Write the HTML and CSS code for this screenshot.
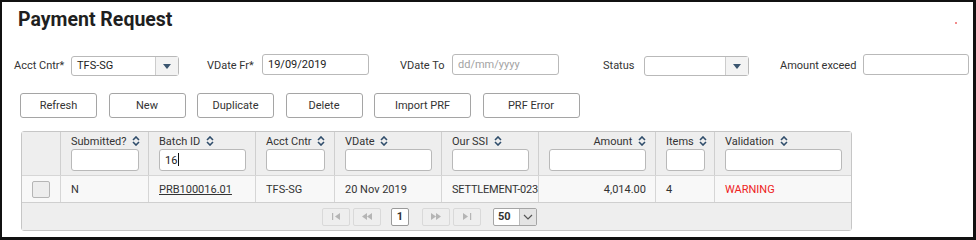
FILE: index.html
```html
<!DOCTYPE html>
<html lang="en">
<head>
    <meta charset="UTF-8">
    <title>Payment Request</title>
    <link rel="stylesheet" href="styles.css">
</head>
<body>

<div class="frame">
    <h1 class="title">Payment Request</h1>
    <span class="dot"></span>

    <!-- Search criteria -->
    <div class="filters">
        <label class="lbl lbl-acct">Acct Cntr*</label>
        <div class="select sel-acct">
            <span class="select-text">TFS-SG</span>
            <span class="select-btn"><svg width="8" height="5" viewBox="0 0 8 5"><path d="M0 0 L8 0 L4 5 Z" fill="#3b5670"/></svg></span>
        </div>

        <label class="lbl lbl-from">VDate Fr*</label>
        <input class="text in-from" type="text" value="19/09/2019">

        <label class="lbl lbl-to">VDate To</label>
        <input class="text in-to" type="text" placeholder="dd/mm/yyyy">

        <label class="lbl lbl-status">Status</label>
        <div class="select sel-status">
            <span class="select-text"></span>
            <span class="select-btn"><svg width="8" height="5" viewBox="0 0 8 5"><path d="M0 0 L8 0 L4 5 Z" fill="#3b5670"/></svg></span>
        </div>

        <label class="lbl lbl-amount">Amount exceed</label>
        <input class="text in-amount" type="text">
    </div>

    <!-- Actions -->
    <div class="actions">
        <button class="btn">Refresh</button>
        <button class="btn">New</button>
        <button class="btn">Duplicate</button>
        <button class="btn">Delete</button>
        <button class="btn btn-wide">Import PRF</button>
        <button class="btn btn-wide">PRF Error</button>
    </div>

    <table class="grid">
        <colgroup>
            <col style="width:38px">
            <col style="width:88px">
            <col style="width:107px">
            <col style="width:79px">
            <col style="width:107px">
            <col style="width:97px">
            <col style="width:117px">
            <col style="width:59px">
            <col style="width:137px">
        </colgroup>
        <thead>
            <tr>
                <th></th>
                <th><div class="th-label">Submitted? <svg class="sort" width="8" height="10" viewBox="0 0 8 10"><path d="M1 4 L4 1 L7 4 M1 6 L4 9 L7 6" fill="none" stroke="#2f4d6b" stroke-width="1.6"/></svg></div><input class="filter" type="text"></th>
                <th><div class="th-label">Batch ID <svg class="sort" width="8" height="10" viewBox="0 0 8 10"><path d="M1 4 L4 1 L7 4 M1 6 L4 9 L7 6" fill="none" stroke="#2f4d6b" stroke-width="1.6"/></svg></div><input class="filter" type="text" value="16"><span class="caret"></span></th>
                <th><div class="th-label">Acct Cntr <svg class="sort" width="8" height="10" viewBox="0 0 8 10"><path d="M1 4 L4 1 L7 4 M1 6 L4 9 L7 6" fill="none" stroke="#2f4d6b" stroke-width="1.6"/></svg></div><input class="filter" type="text"></th>
                <th><div class="th-label">VDate <svg class="sort" width="8" height="10" viewBox="0 0 8 10"><path d="M1 4 L4 1 L7 4 M1 6 L4 9 L7 6" fill="none" stroke="#2f4d6b" stroke-width="1.6"/></svg></div><input class="filter" type="text"></th>
                <th><div class="th-label">Our SSI <svg class="sort" width="8" height="10" viewBox="0 0 8 10"><path d="M1 4 L4 1 L7 4 M1 6 L4 9 L7 6" fill="none" stroke="#2f4d6b" stroke-width="1.6"/></svg></div><input class="filter" type="text"></th>
                <th class="num"><div class="th-label">Amount <svg class="sort" width="8" height="10" viewBox="0 0 8 10"><path d="M1 4 L4 1 L7 4 M1 6 L4 9 L7 6" fill="none" stroke="#2f4d6b" stroke-width="1.6"/></svg></div><input class="filter" type="text"></th>
                <th><div class="th-label">Items <svg class="sort" width="8" height="10" viewBox="0 0 8 10"><path d="M1 4 L4 1 L7 4 M1 6 L4 9 L7 6" fill="none" stroke="#2f4d6b" stroke-width="1.6"/></svg></div><input class="filter" type="text"></th>
                <th><div class="th-label">Validation <svg class="sort" width="8" height="10" viewBox="0 0 8 10"><path d="M1 4 L4 1 L7 4 M1 6 L4 9 L7 6" fill="none" stroke="#2f4d6b" stroke-width="1.6"/></svg></div><input class="filter" type="text"></th>
            </tr>
        </thead>
        <tbody>
            <tr class="row">
                <td class="check-cell"><span class="check"></span></td>
                <td>N</td>
                <td><a class="link" href="#">PRB100016.01</a></td>
                <td>TFS-SG</td>
                <td>20 Nov 2019</td>
                <td class="tight">SETTLEMENT-023</td>
                <td class="num">4,014.00</td>
                <td>4</td>
                <td class="warn">WARNING</td>
            </tr>
            <tr>
                <td class="pager-cell" colspan="9">
                    <div class="pager">
                        <span class="pg pg-first"><svg width="10" height="7" viewBox="0 0 10 7"><rect x="1" y="0" width="1.2" height="7" fill="#b5b5b5"/><path d="M9 0 L9 7 L4 3.5 Z" fill="#b5b5b5"/></svg></span>
                        <span class="pg pg-prev"><svg width="12" height="7" viewBox="0 0 12 7"><path d="M6 0 L6 7 L1 3.5 Z M11 0 L11 7 L6 3.5 Z" fill="#b5b5b5"/></svg></span>
                        <span class="pg-num">1</span>
                        <span class="pg pg-next"><svg width="12" height="7" viewBox="0 0 12 7"><path d="M1 0 L1 7 L6 3.5 Z M6 0 L6 7 L11 3.5 Z" fill="#b5b5b5"/></svg></span>
                        <span class="pg pg-last"><svg width="10" height="7" viewBox="0 0 10 7"><path d="M1 0 L1 7 L6 3.5 Z" fill="#b5b5b5"/><rect x="8" y="0" width="1.2" height="7" fill="#b5b5b5"/></svg></span>
                        <span class="pg-size">
                            <span class="pg-size-text">50</span>
                            <span class="pg-size-btn"><svg width="10" height="6" viewBox="0 0 10 6"><path d="M1 1 L5 5 L9 1" fill="none" stroke="#555" stroke-width="1.2"/></svg></span>
                        </span>
                    </div>
                </td>
            </tr>
        </tbody>
    </table>
</div>

</body>
</html>
```

FILE: styles.css
```css
* {
    box-sizing: border-box;
}
body {
    margin: 0;
    font-family: Roboto, "Liberation Sans", Arial, sans-serif;
    color: #333;
    background: #fff;
}
.frame {
    position: relative;
    width: 976px;
    height: 240px;
    border-style: solid;
    border-color: #111;
    border-width: 2px 3px 3px 2px;
    overflow: hidden;
}
.title {
    margin: 6px 0 0 16px;
    font-size: 19.5px;
    line-height: 24px;
    font-weight: bold;
    color: #1f1f1f;
}
.dot {
    position: absolute;
    left: 953px;
    top: 20px;
    width: 2px;
    height: 2px;
    background: #f28c8c;
}

/* search criteria row */
.filters {
    display: flex;
    align-items: center;
    margin: 22px 0 0 12px;
    height: 22px;
    font-size: 11px;
}
.lbl {
    white-space: nowrap;
}
.lbl-acct { width: 57px; }
.lbl-from { width: 55px; margin-left: 28px; }
.lbl-to { width: 52px; margin-left: 31px; }
.lbl-status { width: 41px; margin-left: 44px; }
.lbl-amount { width: 83px; margin-left: 31px; }

.select {
    display: flex;
    height: 20px;
    margin-top: 2px;
    border: 1px solid #b9b9b9;
    border-radius: 3px;
    background: #fff;
}
.sel-acct { width: 108px; }
.sel-status { width: 105px; }
.select-text {
    flex: 1;
    padding-left: 5px;
    line-height: 18px;
    font-size: 11px;
    color: #222;
}
.select-btn {
    width: 23px;
    display: flex;
    align-items: center;
    justify-content: center;
    border-left: 1px solid #ccc;
    background: #f3f3f3;
}
.text {
    height: 21px;
    border: 1px solid #b9b9b9;
    border-radius: 3px;
    padding: 0 5px;
    font-family: inherit;
    font-size: 11px;
    color: #222;
    margin-bottom: 1px;
}
.text::placeholder {
    color: #a3a3a3;
}
.in-from { width: 107px; }
.in-to { width: 107px; }
.in-amount { width: 106px; }

/* buttons */
.actions {
    display: flex;
    gap: 11.5px;
    margin: 17px 0 0 18px;
}
.btn {
    width: 77px;
    height: 25px;
    border: 1px solid #a5a5a5;
    border-radius: 3px;
    background: #fff;
    font-family: inherit;
    font-size: 11px;
    color: #333;
    padding: 0;
}
.btn-wide {
    width: 97px;
}

/* grid */
.grid {
    margin: 13px 0 0 19px;
    width: 829px;
    table-layout: fixed;
    border-spacing: 0;
    border: 1px solid #c6c6c6;
    border-radius: 3px;
    font-size: 11px;
}
.grid th {
    position: relative;
    background: #eeeeee;
    font-weight: normal;
    text-align: left;
    vertical-align: top;
    padding: 3px 9px 4px 10px;
    border-left: 1px solid #cfcfcf;
    color: #333;
}
.grid th:first-child,
.grid td:first-child {
    border-left: none;
}
.th-label {
    height: 14px;
    line-height: 14px;
    white-space: nowrap;
}
.sort {
    margin-left: 3px;
    vertical-align: -1px;
}
.filter {
    display: block;
    width: 100%;
    height: 22px;
    border: 1px solid #b9b9b9;
    border-radius: 3px;
    padding: 0 5px;
    font-family: inherit;
    font-size: 11px;
    color: #222;
    background: #fff;
}
.caret {
    position: absolute;
    left: 29px;
    top: 21px;
    width: 1px;
    height: 13px;
    background: #111;
}
.grid th.num,
.grid td.num {
    text-align: right;
}
.row td {
    height: 27px;
    background: #f8f8f8;
    border-top: 1px solid #d6d6d6;
    border-left: 1px solid #d6d6d6;
    padding: 0 9px 0 10px;
    white-space: nowrap;
}
.check-cell {
    text-align: center;
}
.check {
    display: inline-block;
    width: 18px;
    height: 17px;
    margin: 3px 2px 0 0;
    border: 1px solid #b5b5b5;
    border-radius: 2px;
    background: #ededed;
}
.link {
    color: #333;
    text-decoration: underline;
}
.row td.tight {
    padding-right: 0;
    letter-spacing: -0.2px;
}
.warn {
    color: #ee2222;
}

/* pager */
.pager-cell {
    height: 28px;
    background: #eeeeee;
    border-top: 1px solid #cfcfcf;
    padding: 0;
}
.pager {
    display: flex;
    align-items: center;
    margin-left: 300px;
}
.pg {
    width: 28px;
    height: 18px;
    display: flex;
    align-items: center;
    justify-content: center;
    border: 1px solid #d9d9d9;
    border-radius: 2px;
    background: #eeeeee;
}
.pg-prev { margin-left: 3px; }
.pg-last { margin-left: 3px; }
.pg-num {
    width: 18px;
    height: 18px;
    margin: 0 13px 0 10px;
    border: 1px solid #9a9a9a;
    border-radius: 2px;
    background: #fff;
    font-weight: bold;
    text-align: center;
    line-height: 16px;
}
.pg-size {
    display: flex;
    margin-left: 12px;
    width: 44px;
    height: 18px;
    border: 1px solid #a5a5a5;
    border-radius: 2px;
    background: #fff;
}
.pg-size-text {
    flex: 1;
    padding-left: 4px;
    font-weight: bold;
    line-height: 16px;
}
.pg-size-btn {
    width: 17px;
    display: flex;
    align-items: center;
    justify-content: center;
    border-left: 1px solid #bbb;
    background: #e4e4e4;
}
```
